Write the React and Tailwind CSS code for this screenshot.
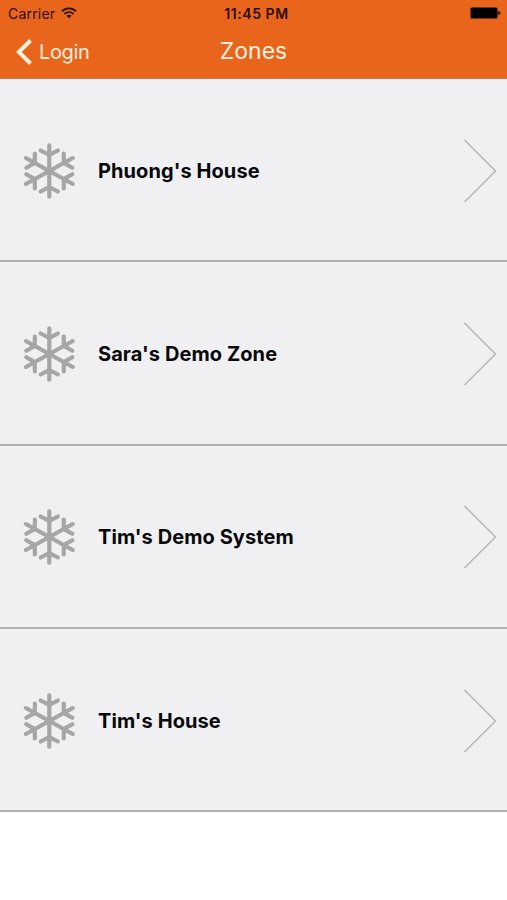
const zones = [
  { id: 1, name: "Phuong's House" },
  { id: 2, name: "Sara's Demo Zone" },
  { id: 3, name: "Tim's Demo System" },
  { id: 4, name: "Tim's House" },
];

const SnowflakeIcon = () => (
  <svg
    width="54"
    height="58"
    viewBox="-27 -29 54 58"
    fill="none"
    stroke="#a6a6a6"
    strokeWidth="4"
    strokeLinecap="round"
  >
    <g transform="translate(0.3 0) scale(1.05 1)">
      {[0, 60, 120, 180, 240, 300].map((angle) => (
        <path
          key={angle}
          d="M0 0V-25.8M-8.2 -20.6L0 -16L8.2 -20.6"
          transform={`rotate(${angle})`}
        />
      ))}
    </g>
  </svg>
);

const WifiIcon = () => (
  <svg width="16" height="12" viewBox="0 0 16 12" fill="none" stroke="#2b0d02" strokeWidth="1.8">
    <path d="M1 4.3C5 0.3 11 0.3 15 4.3" />
    <path d="M3.5 7C6.2 4.4 9.8 4.4 12.5 7" />
    <path d="M8 11.2L5.5 8.7C7 7.5 9 7.5 10.5 8.7Z" fill="#2b0d02" stroke="none" />
  </svg>
);

const BatteryIcon = () => (
  <svg width="31" height="12" viewBox="0 0 31 12" fill="#000">
    <rect x="0.5" y="0.5" width="27" height="11" rx="1.5" />
    <path d="M28.3 4C31 4.5 31 7.5 28.3 8Z" />
  </svg>
);

const StatusBar = () => (
  <div className="grid grid-cols-3 items-center h-[26px] pl-2 pr-[6px] text-[#2b0d02]">
    <div className="flex items-center gap-[6px]">
      <span className="text-[14px] tracking-[0.2px]">Carrier</span>
      <WifiIcon />
    </div>
    <span className="text-center text-[14px] font-semibold tracking-[0.55px] whitespace-nowrap pl-1">
      11:45 PM
    </span>
    <div className="flex justify-end">
      <BatteryIcon />
    </div>
  </div>
);

const NavBar = () => (
  <div className="grid grid-cols-3 items-center h-[51px] pl-4 pr-4 text-[#fff0df]">
    <button type="button" className="flex items-center gap-[7px] pt-px">
      <svg width="16" height="26" viewBox="0 0 16 26" fill="none" stroke="currentColor" strokeWidth="4">
        <path d="M14.5 1.5L2.8 13L14.5 24.5" />
      </svg>
      <span className="text-[20px] tracking-[-0.35px]">Login</span>
    </button>
    <h1 className="text-center text-[23px]">Zones</h1>
  </div>
);

const ZoneRow = ({ name }) => (
  <li className="flex items-center h-[183.3px] pt-[2px] pl-[22px] pr-[10px] bg-[#f0f0f2] border-b-2 border-[#b0b0b2]">
    <SnowflakeIcon />
    <span className="flex-1 ml-[22px] text-[20px] font-bold tracking-[0.08px] text-[#09090b]">
      {name}
    </span>
    <svg width="34" height="64" viewBox="0 0 34 64" fill="none" stroke="#b9b9bb" strokeWidth="1.6">
      <path d="M1.5 1L32.5 32L1.5 63" />
    </svg>
  </li>
);

const App = () => {
  return (
    <div className="min-h-screen bg-white font-['Inter',sans-serif]">
      <header className="h-[79px] bg-[#ea651c] border-b border-[#d9763f]">
        <StatusBar />
        <NavBar />
      </header>
      <ul>
        {zones.map((zone) => (
          <ZoneRow key={zone.id} name={zone.name} />
        ))}
      </ul>
    </div>
  );
};

export default App;
